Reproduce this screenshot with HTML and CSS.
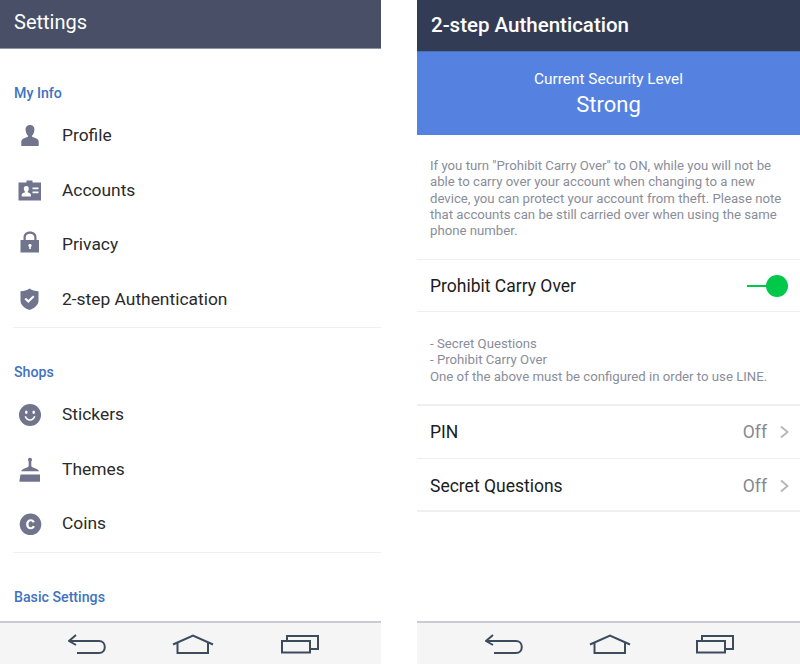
FILE: index.html
```html
<!DOCTYPE html>
<html lang="en">
<head>
  <title>Settings</title>
  <link rel="stylesheet" href="styles.css">
</head>
<body>

  <div class="screens">

    <!-- Settings list -->
    <div class="phone phone-left">
      <div class="header">Settings</div>
      <div class="content">
        <div class="section">
          <div class="section-title">My Info</div>
          <div class="row">
            <svg class="icon" viewBox="0 0 26 26"><path d="M13 3c3 0 4.600 2.200 4.400 5-.2 2.600-1 4.200-2.200 5.400-.5.600-.2 1.300.5 1.700 2.500 1 5.400 1.800 6 4v4.900H4.300v-4.900c.6-2.200 3.500-3 6-4 .7-.4 1-1.100.5-1.700C9.600 12.200 8.800 10.600 8.600 8 8.400 5.200 10 3 13 3z"/></svg>
            <span>Profile</span>
          </div>
          <div class="row">
            <svg class="icon" viewBox="0 0 26 26"><path fill-rule="evenodd" d="M1.500 5.500h8V3.500h6v2h8.500v18H1.500zM9.300 9c-1.700 0-2.700 1.300-2.500 3 .1 1.200.5 2 1.100 2.600.3.400.1.800-.3 1-1.300.5-2.600.9-2.900 2v2h9.200v-2c-.3-1.100-1.600-1.500-2.900-2-.4-.2-.6-.6-.3-1 .6-.6 1-1.400 1.100-2.600.2-1.700-.8-3-2.500-3zM15.500 10.500v1.800h6v-1.800zM15.500 14.500v1.800h6v-1.800z"/></svg>
            <span>Accounts</span>
          </div>
          <div class="row">
            <svg class="icon" viewBox="0 2 26 26"><path fill-rule="evenodd" d="M6.500 11V8.500C6.500 4.800 9 2.500 13 2.500s6.500 2.300 6.500 6V11H22v12.500H3.500V11zM8.700 11h8.600V8.500c0-2.300-1.700-3.800-4.300-3.800S8.700 6.200 8.700 8.500zM13 15c-1 0-1.700.7-1.700 1.600 0 .6.300 1.100.9 1.400v2h1.600v-2c.6-.3.900-.8.900-1.400 0-.9-.7-1.600-1.700-1.600z"/></svg>
            <span>Privacy</span>
          </div>
          <div class="row">
            <svg class="icon" viewBox="0.500 0 26 26"><path fill-rule="evenodd" d="M13 2.500c2.500 1.800 5.500 2.700 9 2.800v9.200c0 4.500-4 7.800-9 9.500-5-1.700-9-5-9-9.500V5.300c3.500-.1 6.500-1 9-2.800zM9.500 11.800 8 13.300l3.800 3.700 6.200-6-1.500-1.500-4.700 4.500z"/></svg>
            <span>2-step Authentication</span>
          </div>
        </div>

        <div class="section">
          <div class="section-title">Shops</div>
          <div class="row">
            <svg class="icon" viewBox="0 -1 26 26"><path fill-rule="evenodd" d="M13 2a11 11 0 1 1 0 22 11 11 0 0 1 0-22zM9.300 8.500a1.300 1.700 0 1 0 0 3.400 1.300 1.700 0 0 0 0-3.400zM16.700 8.500a1.300 1.700 0 1 0 0 3.400 1.300 1.700 0 0 0 0-3.400zM7.500 14.500c.8 2.800 3 4.300 5.500 4.300s4.700-1.500 5.500-4.300l-1.500-.4c-.6 2-2.100 3.100-4 3.100s-3.400-1.100-4-3.100z"/></svg>
            <span>Stickers</span>
          </div>
          <div class="row">
            <svg class="icon" viewBox="0 0 26 26"><path d="M13 1.800c1.200 0 2 .8 2 2 0 .8-.4 1.300-.7 1.800v4.500c0 1.800 7.200 2.300 7.700 5.200H4.200c.5-2.900 7.500-3.400 7.500-5.200V5.600c-.3-.5-.7-1-.7-1.800 0-1.200.8-2 2-2z"/><path d="M3.500 18.500h19.500v7.200H2.300z"/></svg>
            <span>Themes</span>
          </div>
          <div class="row">
            <svg class="icon" viewBox="-0.500 -1 26 26"><path fill-rule="evenodd" d="M13 2.500a10.800 10.800 0 1 1 0 21.600 10.800 10.800 0 0 1 0-21.600zM13.300 8.300c-2.800 0-4.700 2-4.700 5s1.900 5 4.700 5c2 0 3.500-1.100 4-2.800l-2.100-.7c-.3.900-1 1.500-1.900 1.500-1.400 0-2.300-1.100-2.300-3s.9-3 2.300-3c.9 0 1.600.6 1.900 1.500l2.100-.7c-.5-1.700-2-2.800-4-2.800z"/></svg>
            <span>Coins</span>
          </div>
        </div>

        <div class="section">
          <div class="section-title">Basic Settings</div>
        </div>
      </div>
      <div class="navbar">
        <svg class="nav-back" viewBox="0 0 38 20"><path d="M8 1 1 7l7 4M1.500 7H31c3.500 0 5.800 2.500 5.800 6s-2.300 6-5.800 6H9"/></svg>
        <svg class="nav-home" viewBox="0 0 42 20"><path d="M1 10.500 21 1.500 41 10.500M5.500 9v10h30.500V9"/></svg>
        <svg class="nav-recent" viewBox="0 0 38 20"><path d="M1 7h28v11.500H1zM6 6.500V2h31v13h-8"/></svg>
      </div>
    </div>

    <!-- 2-step authentication -->
    <div class="phone phone-right">
      <div class="header header-dark">2-step Authentication</div>
      <div class="level">
        <div class="level-label">Current Security Level</div>
        <div class="level-value">Strong</div>
      </div>
      <div class="content">
        <div class="note note-top">If you turn "Prohibit Carry Over" to ON, while you will not be able to carry over your account when changing to a new device, you can protect your account from theft. Please note that accounts can be still carried over when using the same phone number.</div>
        <div class="setting setting-switch">
          <span>Prohibit Carry Over</span>
          <div class="switch"><div class="switch-knob"></div></div>
        </div>
        <div class="note note-mid">- Secret Questions<br>- Prohibit Carry Over<br>One of the above must be configured in order to use LINE.</div>
        <div class="setting setting-pin">
          <span>PIN</span>
          <span class="setting-value">Off</span>
          <svg class="chevron" viewBox="0 0 10 16"><path d="M2 2.500 8.500 8 2 13.500"/></svg>
        </div>
        <div class="setting setting-last">
          <span>Secret Questions</span>
          <span class="setting-value">Off</span>
          <svg class="chevron" viewBox="0 0 10 16"><path d="M2 2.500 8.500 8 2 13.500"/></svg>
        </div>
      </div>
      <div class="navbar navbar-right">
        <svg class="nav-back" viewBox="0 0 38 20"><path d="M8 1 1 7l7 4M1.500 7H31c3.500 0 5.800 2.500 5.800 6s-2.300 6-5.800 6H9"/></svg>
        <svg class="nav-home" viewBox="0 0 42 20"><path d="M1 10.500 21 1.500 41 10.500M5.500 9v10h30.500V9"/></svg>
        <svg class="nav-recent" viewBox="0 0 38 20"><path d="M1 7h28v11.500H1zM6 6.500V2h31v13h-8"/></svg>
      </div>
    </div>

  </div>

</body>
</html>
```

FILE: styles.css
```css
:root {
  --icon: #70748c;
  --link: #3f73c2;
  --line: #eeeff1;
  --note: #8a8d99;
  --nav: #3d4c5c;
}

* {
  box-sizing: border-box;
}

body {
  margin: 0;
  background: #fff;
  font-family: Roboto, sans-serif;
  color: #2a2a2a;
}

.screens {
  display: flex;
  justify-content: space-between;
  height: 664px;
}

.phone {
  display: flex;
  flex-direction: column;
  height: 100%;
}

.phone-left {
  width: 381px;
}

.phone-right {
  width: 383px;
}

.header {
  height: 49px;
  flex: none;
  padding: 10px 14px 0;
  background: #484f67;
  border-bottom: 1px solid #8e93a3;
  color: #fff;
  font-size: 20px;
}

.header-dark {
  height: 52px;
  padding-top: 13px;
  background: #333c55;
  border-bottom: 1px solid #4a6fba;
  font-size: 20.500px;
  font-weight: 500;
}

.content {
  flex: 1;
  overflow: hidden;
}

/* left screen */

.section {
  margin-left: 13px;
  padding-top: 35px;
  padding-bottom: 1px;
  border-bottom: 1px solid var(--line);
}

.section:last-child {
  border-bottom: none;
}

.section-title {
  height: 18px;
  margin-bottom: 6px;
  padding-left: 1px;
  line-height: 18px;
  color: var(--link);
  font-size: 14.200px;
  font-weight: 500;
}

.row {
  display: flex;
  align-items: center;
  height: 54.500px;
  font-size: 17.400px;
}

.row span {
  margin-left: 19px;
}

.icon {
  width: 26px;
  height: 26px;
  margin-left: 4px;
  fill: var(--icon);
}

/* right screen */

.level {
  height: 83px;
  flex: none;
  padding-top: 17px;
  background: #5582e0;
  color: #fff;
  text-align: center;
}

.level-label {
  font-size: 15.400px;
  line-height: 20px;
}

.level-value {
  font-size: 22px;
  line-height: 32px;
}

.note {
  padding: 0 14px 0 13px;
  color: var(--note);
  font-size: 13.200px;
  line-height: 16.300px;
}

.note-top {
  height: 124px;
  padding-top: 23px;
}

.note-mid {
  height: 92px;
  padding-top: 24px;
}

.setting {
  display: flex;
  align-items: center;
  height: 54px;
  padding: 0 11px 0 13px;
  border-top: 1px solid var(--line);
  color: #1c1c1c;
  font-size: 17.500px;
}

.setting-switch {
  height: 53px;
  padding-top: 1px;
  border-bottom: 1px solid var(--line);
}

.setting-last {
  padding-top: 2px;
  border-bottom: 2px solid var(--line);
}

.setting-pin {
  border-top-width: 2px;
}

.setting-value {
  margin-left: auto;
  color: #86888f;
}

.chevron {
  width: 10px;
  height: 16px;
  margin-left: 12px;
  fill: none;
  stroke: #b4b6bc;
  stroke-width: 1.800;
}

.switch {
  display: flex;
  align-items: center;
  justify-content: flex-end;
  width: 41px;
  height: 22px;
  margin-left: auto;
  margin-right: 1px;
  background: linear-gradient(#02c84a, #02c84a) left center / 100% 2px no-repeat;
}

.switch-knob {
  width: 22px;
  height: 22px;
  border-radius: 50%;
  background: #02c84a;
}

/* bottom bar */

.navbar {
  display: flex;
  align-items: flex-end;
  height: 43px;
  flex: none;
  padding-bottom: 10px;
  background: #f5f5f6;
  border-top: 2px solid #c9cbd2;
}

.navbar svg {
  height: 20px;
  fill: none;
  stroke: var(--nav);
  stroke-width: 2;
}

.nav-back {
  width: 38px;
  margin-left: 68px;
}

.nav-home {
  width: 42px;
  margin-left: 66px;
}

.nav-recent {
  width: 38px;
  margin-left: 67px;
}

.navbar-right .nav-recent {
  margin-left: 65px;
}
```
